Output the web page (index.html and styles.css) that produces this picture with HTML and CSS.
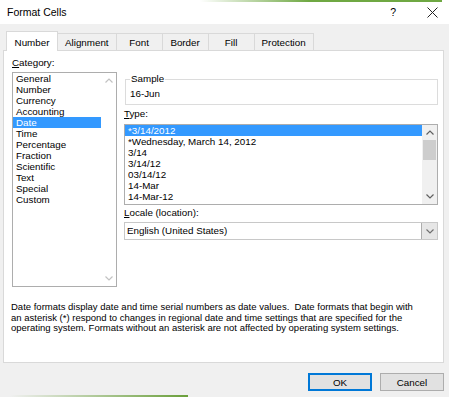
FILE: index.html
```html
<!DOCTYPE html>
<html>
<head>
<meta charset="utf-8">
<title>Format Cells</title>
<link rel="stylesheet" href="styles.css">
</head>
<body>
<div class="dialog">
  <div class="titlebar">
    <span class="title">Format Cells</span>
    <span class="help">?</span>
    <svg class="close" width="11" height="11" viewBox="0 0 11 11"><path d="M0.5 0.5L10.5 10.5M10.5 0.5L0.5 10.5" stroke="#222" stroke-width="1"/></svg>
  </div>
  <div class="tabs">
    <div class="tab active">Number</div>
    <div class="tab">Alignment</div>
    <div class="tab">Font</div>
    <div class="tab">Border</div>
    <div class="tab">Fill</div>
    <div class="tab">Protection</div>
  </div>
  <div class="panel">
    <div class="main">
      <div class="col-left">
        <div class="label"><u>C</u>ategory:</div>
        <div class="listbox cat">
          <div class="items">
            <div class="item">General</div>
            <div class="item">Number</div>
            <div class="item">Currency</div>
            <div class="item">Accounting</div>
            <div class="item selected">Date</div>
            <div class="item">Time</div>
            <div class="item">Percentage</div>
            <div class="item">Fraction</div>
            <div class="item">Scientific</div>
            <div class="item">Text</div>
            <div class="item">Special</div>
            <div class="item">Custom</div>
          </div>
          <div class="vscroll light">
            <div class="arrow"><svg width="8" height="5" viewBox="0 0 8 5"><path d="M0.5 4.5L4 1L7.5 4.5" fill="none" stroke="currentColor" stroke-width="1.2"/></svg></div>
            <div class="track"></div>
            <div class="arrow"><svg width="8" height="5" viewBox="0 0 8 5"><path d="M0.5 0.5L4 4L7.5 0.5" fill="none" stroke="currentColor" stroke-width="1.2"/></svg></div>
          </div>
        </div>
      </div>
      <div class="col-right">
        <div class="group">
          <span class="legend">Sample</span>
          <div class="sample">16-Jun</div>
        </div>
        <div class="label type-label"><u>T</u>ype:</div>
        <div class="listbox typelist">
          <div class="items">
            <div class="item selected">*3/14/2012</div>
            <div class="item">*Wednesday, March 14, 2012</div>
            <div class="item">3/14</div>
            <div class="item">3/14/12</div>
            <div class="item">03/14/12</div>
            <div class="item">14-Mar</div>
            <div class="item">14-Mar-12</div>
          </div>
          <div class="vscroll">
            <div class="arrow"><svg width="8" height="5" viewBox="0 0 8 5"><path d="M0.5 4.5L4 1L7.5 4.5" fill="none" stroke="currentColor" stroke-width="1.2"/></svg></div>
            <div class="thumb"></div>
            <div class="track"></div>
            <div class="arrow"><svg width="8" height="5" viewBox="0 0 8 5"><path d="M0.5 0.5L4 4L7.5 0.5" fill="none" stroke="currentColor" stroke-width="1.2"/></svg></div>
          </div>
        </div>
        <div class="label locale-label"><u>L</u>ocale (location):</div>
        <div class="combo">
          <span class="combo-text">English (United States)</span>
          <span class="dropbtn"><svg width="8" height="5" viewBox="0 0 8 5"><path d="M0.5 0.5L4 4L7.5 0.5" fill="none" stroke="currentColor" stroke-width="1.2"/></svg></span>
        </div>
      </div>
    </div>
    <p class="desc">Date formats display date and time serial numbers as date values.&nbsp; Date formats that begin with an asterisk (*) respond to changes in regional date and time settings that are specified for the operating system. Formats without an asterisk are not affected by operating system settings.</p>
  </div>
  <div class="buttons">
    <button class="btn default">OK</button>
    <button class="btn">Cancel</button>
  </div>
</div>
</body>
</html>
```

FILE: styles.css
```css
* { box-sizing: border-box; }
html, body { margin: 0; padding: 0; }
body {
  width: 449px;
  height: 397px;
  overflow: hidden;
  font-family: "Liberation Sans", Arial, sans-serif;
  font-size: 9.8px;
  color: #000;
  background:
    linear-gradient(to right, rgba(120,170,70,0), #6a9f3a) no-repeat 10px 395px / 178px 2px,
    #f0f0f0;
}
.dialog { display: flex; flex-direction: column; height: 397px; }

.titlebar {
  height: 24px;
  display: flex;
  align-items: center;
  padding-left: 7px;
  background:
    linear-gradient(to right, rgba(120,170,70,0), #6fa843 45%, #6fa843) no-repeat 200px 0 / 242px 2px,
    #fff;
}
.title { flex: 1; font-size: 10.5px; }
.help { font-size: 10.5px; margin-right: 31px; }
.close { margin-right: 11px; }

.tabs {
  display: flex;
  align-items: flex-end;
  height: 26px;
  padding-left: 6px;
}
.tab {
  height: 17px;
  min-width: 47px;
  padding: 1px 7px 0;
  line-height: 15px;
  text-align: center;
  background: #f0f0f0;
  border: 1px solid #d9d9d9;
  border-bottom: none;
  margin-left: -1px;
}
.tab:first-child { margin-left: 0; }
.tab.active {
  position: relative;
  height: 20px;
  padding-top: 3px;
  margin-bottom: -1px;
  background: #fff;
  z-index: 1;
  min-width: 52px;
}

.panel {
  height: 313px;
  margin: 0 5px 0 3px;
  background: #fff;
  border: 1px solid #d9d9d9;
}
.main {
  display: grid;
  grid-template-columns: 105px 314px;
  column-gap: 7px;
  padding: 6px 0 0 8px;
}
.label { line-height: 11px; height: 11px; }
.label u { text-decoration-thickness: 1px; text-underline-offset: 1px; }

.listbox {
  display: flex;
  border: 1px solid #adadad;
  background: #fff;
}
.cat { margin-top: 4px; height: 215px; }
.items { flex: 1; }
.item { height: 11px; line-height: 11px; padding-left: 3px; white-space: nowrap; }
.item.selected { background: #3399ff; color: #fff; }
.vscroll {
  width: 15px;
  display: flex;
  flex-direction: column;
  background: #f0f0f0;
  color: #606060;
}
.vscroll.light { background: #fff; color: #c2c2c2; }
.arrow { height: 15px; display: flex; align-items: center; justify-content: center; }
.track { flex: 1; }
.thumb { height: 20px; margin: 0 1px; background: #cdcdcd; }

.group {
  position: relative;
  margin-top: 22px;
  margin-left: 1px;
  height: 26px;
  border: 1px solid #dcdcdc;
}
.legend {
  position: absolute;
  top: -7px;
  left: 4px;
  padding: 0 1px;
  line-height: 11px;
  background: #fff;
}
.sample { padding: 8px 0 0 4px; line-height: 11px; }
.type-label { margin-top: 3px; }
.typelist { margin-top: 5px; height: 81px; }
.locale-label { margin-top: 2px; }
.combo {
  margin-top: 4px;
  height: 18px;
  display: flex;
  align-items: stretch;
  border: 1px solid #c8c8c8;
}
.combo-text { flex: 1; line-height: 16px; padding-left: 2px; }
.dropbtn {
  width: 16px;
  display: flex;
  align-items: center;
  justify-content: center;
  background: #e6e6e6;
  border-left: 1px solid #adadad;
  color: #707070;
}

.desc {
  margin: 15px 0 0;
  padding: 0 22px 0 7px;
  font-size: 9.5px;
  line-height: 10.5px;
}

.buttons {
  display: flex;
  justify-content: flex-end;
  gap: 8px;
  margin-top: 10px;
  padding-right: 5px;
}
.btn {
  width: 64px;
  height: 18px;
  padding: 0;
  font-family: inherit;
  font-size: 9.8px;
  color: #000;
  background: #e1e1e1;
  border: 1px solid #adadad;
}
.btn.default { border-color: #0078d7; box-shadow: inset 0 0 0 1px #0078d7; }
```
